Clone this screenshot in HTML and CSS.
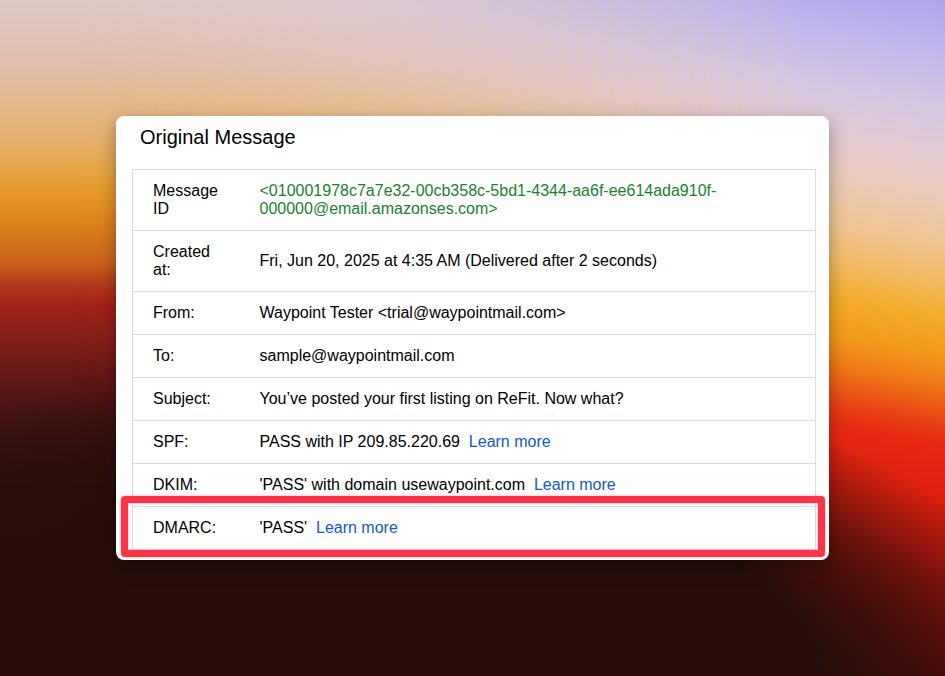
FILE: index.html
```
<!DOCTYPE html>
<html lang="en">
<head>
    <meta charset="UTF-8">
    <meta name="viewport" content="width=device-width, initial-scale=1.0">
    <title>Original Message</title>
    <link rel="stylesheet" href="styles.css">
</head>
<body>
    <main class="card">
        <h1>Original Message</h1>
        <table class="details">
            <tr>
                <th scope="row">Message ID</th>
                <td class="message-id">&lt;010001978c7a7e32-00cb358c-5bd1-4344-aa6f-ee614ada910f-000000@email.amazonses.com&gt;</td>
            </tr>
            <tr>
                <th scope="row">Created at:</th>
                <td>Fri, Jun 20, 2025 at 4:35 AM (Delivered after 2 seconds)</td>
            </tr>
            <tr>
                <th scope="row">From:</th>
                <td>Waypoint Tester &lt;trial@waypointmail.com&gt;</td>
            </tr>
            <tr>
                <th scope="row">To:</th>
                <td>sample@waypointmail.com</td>
            </tr>
            <tr>
                <th scope="row">Subject:</th>
                <td>You’ve posted your first listing on ReFit. Now what?</td>
            </tr>
            <tr>
                <th scope="row">SPF:</th>
                <td>PASS with IP 209.85.220.69 &nbsp;<a href="#">Learn more</a></td>
            </tr>
            <tr>
                <th scope="row">DKIM:</th>
                <td>'PASS' with domain usewaypoint.com &nbsp;<a href="#">Learn more</a></td>
            </tr>
            <tr class="highlight">
                <th scope="row">DMARC:</th>
                <td>'PASS' &nbsp;<a href="#">Learn more</a></td>
            </tr>
        </table>
    </main>
</body>
</html>
```
FILE: styles.css
```
* { margin: 0; padding: 0; box-sizing: border-box; }

body {
    position: relative;
    min-height: 100vh;
    padding: 116px;
    border-bottom: 2px solid #050202;
    font-family: Arial, "Liberation Sans", sans-serif;
    font-size: 16px;
    line-height: 18px;
    color: #000;
    background: linear-gradient(to bottom, #dfc9c6 0%, #e0c0ae 9%, #e3b888 16%, #e5b06a 21%, #e6a547 25%, #e49627 29%, #d97d1c 34%, #c9601c 39%, #b0391c 42%, #a0231a 45%, #8a1f19 49%, #651815 55%, #451512 61%, #33110e 67%, #280f0a 75%, #240d08 83%, #280b08 100%);
}

/* right half of the sunset, faded in over the left one */
body::before,
body::after {
    content: "";
    position: absolute;
    inset: 0;
    z-index: -1;
}
body::before {
    background: linear-gradient(190deg, #aea4ec 0%, #c4b9ea 7%, #d3c5e4 12%, #e2cad4 18%, #eacaba 23%, #efc594 29%, #f2b85a 34%, #f3aa28 38%, #f39a1c 42%, #ee7618 46%, #ea4414 50%, #e62812 53%, #dc2010 59%, #c01a0f 65%, #98140c 72%, #70100b 79%, #400c0a 86%, #280c09 100%);
    -webkit-mask-image: linear-gradient(to right, transparent 8%, rgba(0,0,0,0.04) 12%, rgba(0,0,0,0.5) 50%, #000 85%);
    mask-image: linear-gradient(to right, transparent 8%, rgba(0,0,0,0.04) 12%, rgba(0,0,0,0.5) 50%, #000 85%);
}
body::after {
    background: radial-gradient(62% 44% at 40% 104%, #260d09 76%, rgba(38,13,9,0.6) 95%, transparent 118%);
}

.card {
    padding: 10px 13px 10px 16px;
    background: #fff;
    border-radius: 8px;
    box-shadow: 0 6px 18px rgba(0,0,0,0.35);
}
.card h1 { padding: 0 8px; margin-bottom: 21px; font-size: 20px; font-weight: normal; line-height: 22px; }

.details { width: 100%; border: 1px solid #dadce0; border-collapse: collapse; }
.details tr { border-top: 1px solid #dadce0; }
.details th, .details td { padding: 12px 20px; text-align: left; vertical-align: middle; }
.details th { width: 107px; font-weight: normal; }
.message-id { color: #217e30; }
a { color: #1558c8; text-decoration: none; }

.highlight { position: relative; }
.highlight::after {
    content: "";
    position: absolute;
    inset: -12px -9px -7px -12px;
    border: 7px solid #fb3449;
    border-radius: 4px;
    box-shadow: 0 0 2px 1px rgba(251,90,90,0.25), inset 0 0 2px 1px rgba(251,90,90,0.25);
}
```
